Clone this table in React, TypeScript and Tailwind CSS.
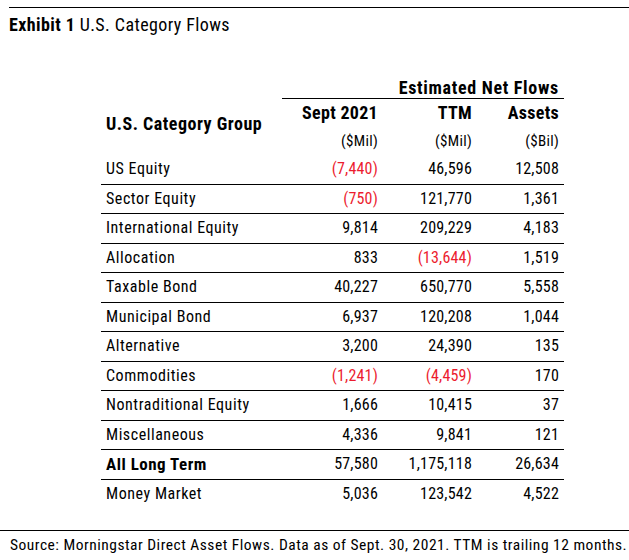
import React from "react";

type Row = { label: string; a: string; b: string; c: string; bold?: boolean; last?: boolean };

const rows: Row[] = [
  { label: "US Equity", a: "(7,440)", b: "46,596", c: "12,508" },
  { label: "Sector Equity", a: "(750)", b: "121,770", c: "1,361" },
  { label: "International Equity", a: "9,814", b: "209,229", c: "4,183" },
  { label: "Allocation", a: "833", b: "(13,644)", c: "1,519" },
  { label: "Taxable Bond", a: "40,227", b: "650,770", c: "5,558" },
  { label: "Municipal Bond", a: "6,937", b: "120,208", c: "1,044" },
  { label: "Alternative", a: "3,200", b: "24,390", c: "135" },
  { label: "Commodities", a: "(1,241)", b: "(4,459)", c: "170" },
  { label: "Nontraditional Equity", a: "1,666", b: "10,415", c: "37" },
  { label: "Miscellaneous", a: "4,336", b: "9,841", c: "121" },
  { label: "All Long Term", a: "57,580", b: "1,175,118", c: "26,634", bold: true },
  { label: "Money Market", a: "5,036", b: "123,542", c: "4,522", last: true },
];

function Num({ v }: { v: string }) {
  const neg = v.startsWith("(");
  return (
    <div className={neg ? "text-right tracking-[0.2px] text-[#ec1c2e]" : "text-right tracking-[0.2px]"}>{v}</div>
  );
}

export default function App() {
  return (
    <div
      className="w-[629px] h-[560px] bg-white text-black overflow-hidden"
      style={{ fontFamily: '"Roboto Condensed", "Liberation Sans Narrow", "Arial Narrow", Roboto, sans-serif', fontStretch: "condensed" }}
    >
      <div className="pt-[7px]">
        <div className="ml-[9px] border-t border-black" />
        <div className="ml-[9px] mt-[5px] text-[18px] leading-[24px] tracking-[0.4px]">
          <span className="font-bold">Exhibit 1</span> U.S. Category Flows
        </div>
      </div>

      <div className="ml-[101px] w-[463px] mt-[40px]">
        <div className="ml-[181px] border-b border-black text-right pr-[5px] text-[18px] leading-[22px] font-bold h-[22px] tracking-[0.7px]">
          Estimated Net Flows
        </div>
        <div className="grid grid-cols-[181px_96px_94px_87px] h-[56px] pr-[5px]">
          <div className="pl-[5px] pt-[14px] text-[18px] leading-[22px] font-bold tracking-[0.5px]">
            U.S. Category Group
          </div>
          {[
            ["Sept 2021", "($Mil)"],
            ["TTM", "($Mil)"],
            ["Assets", "($Bil)"],
          ].map(([t, u]) => (
            <div key={t} className="text-right pt-[3px]">
              <div className="text-[18px] leading-[22px] font-bold tracking-[0.3px]">{t}</div>
              <div className="text-[15px] leading-[20px] mt-[7px] tracking-[0.3px]">{u}</div>
            </div>
          ))}
        </div>
        {rows.map((r) => (
          <div
            key={r.label}
            className={
              "grid grid-cols-[181px_96px_94px_87px] pr-[5px] h-[29.5px] items-center text-[16px] leading-[20px] " +
              (r.last ? "" : "border-b border-black")
            }
          >
            <div className={r.bold ? "pl-[5px] font-bold text-[17px] tracking-[0.5px]" : "pl-[5px] tracking-[0.55px]"}>
              {r.label}
            </div>
            <Num v={r.a} />
            <Num v={r.b} />
            <Num v={r.c} />
          </div>
        ))}
      </div>

      <div className="mt-[21px] border-t border-black" />
      <div className="pl-[10px] pt-[4px] text-[15.5px] leading-[20px] tracking-[0.5px] whitespace-nowrap">
        Source: Morningstar Direct Asset Flows. Data as of Sept. 30, 2021. TTM is trailing 12 months.
      </div>
    </div>
  );
}
